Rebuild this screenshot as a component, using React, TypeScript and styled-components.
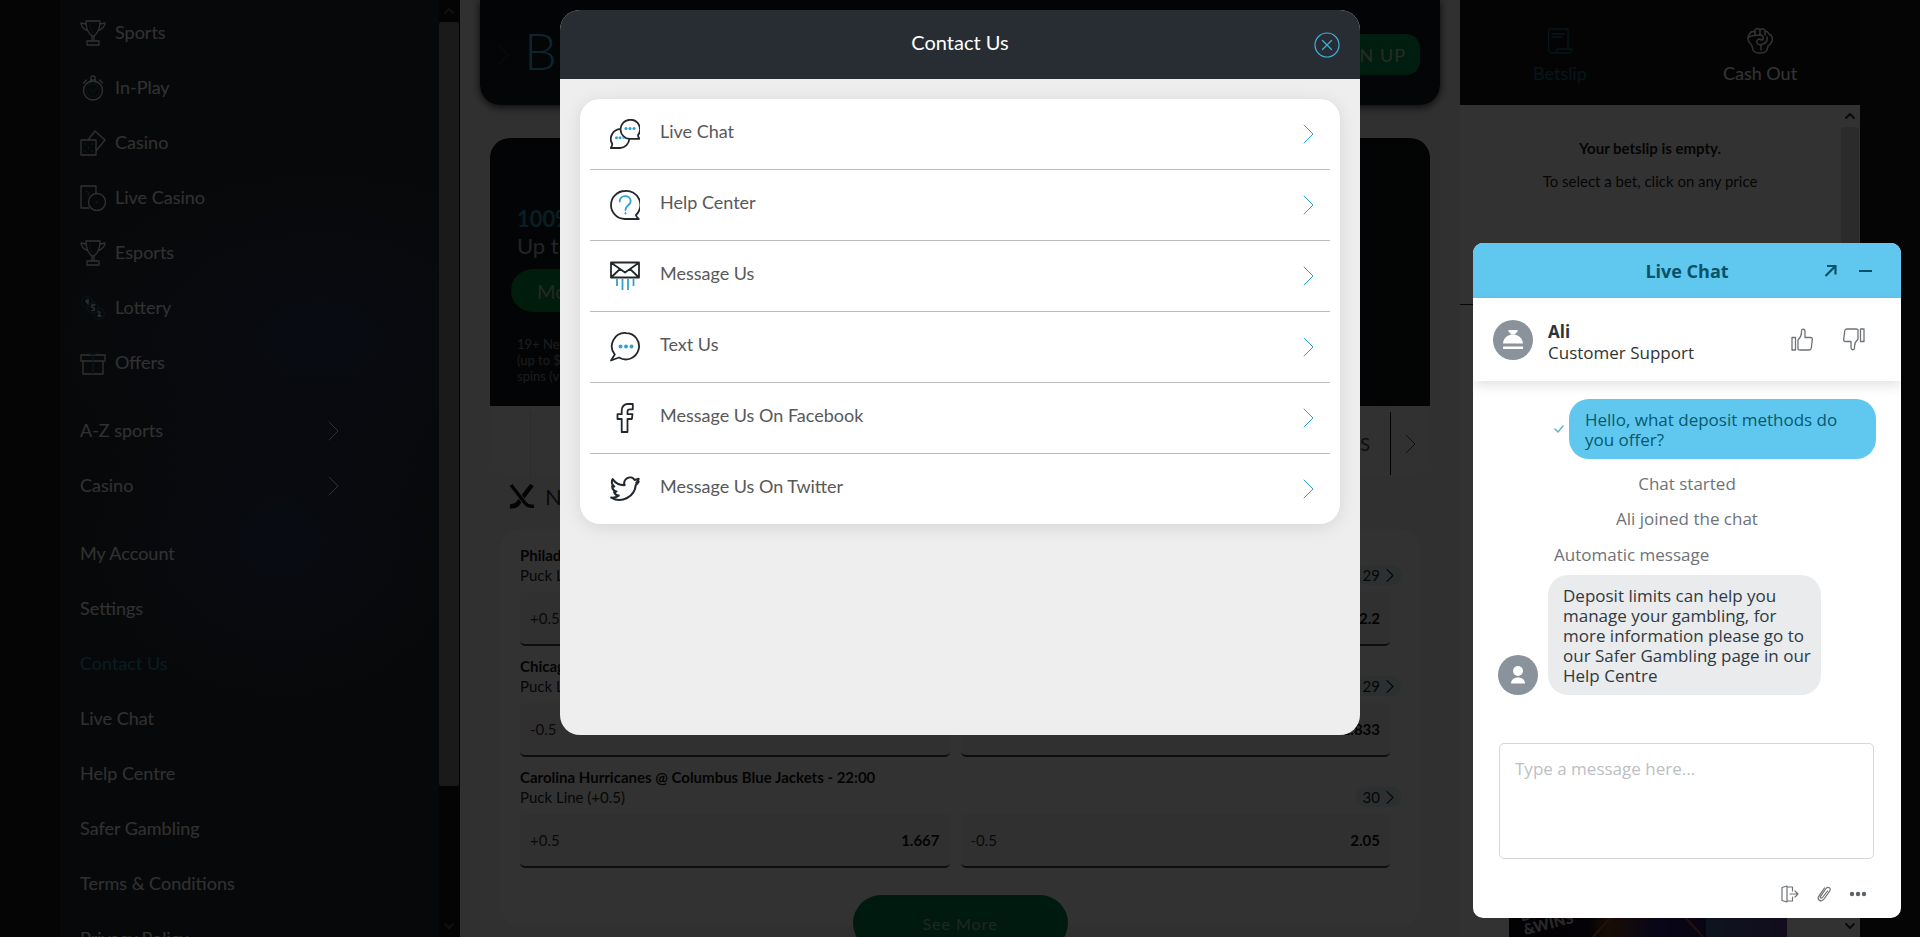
import React from "react";
import styled, { createGlobalStyle } from "styled-components";

const GlobalStyle = createGlobalStyle`
  *, *::before, *::after { box-sizing: border-box; }
  html, body, #root { height: 100%; }
  body {
    margin: 0;
    overflow: hidden;
    background: #1b1b1b;
    font-family: Lato, "Liberation Sans", sans-serif;
    font-size: 18px;
    color: #333;
  }
  button, textarea { font: inherit; }
  button { border: 0; padding: 0; background: none; color: inherit; cursor: pointer; }
  a { color: inherit; text-decoration: none; }
  h1, h2, p, ul { margin: 0; padding: 0; }
  ul { list-style: none; }
  svg { display: block; flex: none; }
`;

/* ---------- page shell ---------- */

const Page = styled.div`
  display: flex;
  height: 100vh;
  padding: 0 60px;
  overflow: hidden;
`;

const Sidebar = styled.aside`
  display: flex;
  flex: none;
  width: 400px;
  background:
    radial-gradient(ellipse 200px 170px at 220px 540px, #2b3a5a 0%, rgba(43, 58, 90, 0) 100%),
    radial-gradient(ellipse 280px 180px at 260px 340px, #2b3a5a 0%, rgba(43, 58, 90, 0) 100%),
    #262b30;
  border-right: 1px solid #000;
`;

const Menu = styled.nav`
  flex: 1;
  padding: 5px 20px 0;
`;

const MenuGroup = styled.ul`
  margin-bottom: 13px;
`;

const MenuLink = styled.a<{ $active?: boolean }>`
  display: flex;
  align-items: center;
  gap: 9px;
  height: 55px;
  color: ${(p) => (p.$active ? "#2a90b0" : "#f4f4f4")};
`;

const MenuLabel = styled.span`
  padding-bottom: 2px;
`;

const MenuArrow = styled.span`
  margin-left: auto;
  margin-right: 80px;
`;

const ScrollRail = styled.div<{ $light?: boolean }>`
  display: flex;
  flex-direction: column;
  flex: none;
  align-items: center;
  width: 20px;
  padding: 8px 0;
  background: ${(p) => (p.$light ? "#f8f8f8" : "#161618")};
`;

const ScrollThumb = styled.div<{ $light?: boolean }>`
  width: ${(p) => (p.$light ? "18px" : "20px")};
  height: 83%;
  margin: 8px 0 auto;
  border-radius: 3px;
  background: ${(p) => (p.$light ? "#d6d6d6" : "#848488")};
`;

const Main = styled.main`
  flex: 1;
  min-width: 0;
  overflow: hidden;
  background: #f0f0f0;
`;

/* ---------- centre column ---------- */

const TopBar = styled.header`
  display: flex;
  align-items: center;
  height: 105px;
  margin: 0 20px;
  padding: 4px 20px 0 18px;
  border-radius: 0 0 20px 20px;
  background: linear-gradient(#101619, #191d24);
  box-shadow: 0 2px 8px rgba(0, 0, 0, 0.8);
`;

const Logo = styled.span`
  margin-left: 15px;
  padding-bottom: 10px;
  font-size: 52px;
  font-weight: 300;
  line-height: 60px;
  color: #3fb4dc;
`;

const SignUp = styled.button`
  height: 41px;
  margin-left: auto;
  padding: 0 14px;
  border-radius: 14px;
  background: #00964c;
  color: #c4d4cc;
  letter-spacing: 1px;
`;

const Banner = styled.section`
  height: 268px;
  margin: 33px 30px 0;
  padding: 67px 27px 0;
  border-radius: 20px 20px 0 0;
  background: linear-gradient(90deg, #14171c, #0b171e 80%, #101417);
`;

const BannerTitle = styled.p<{ $accent?: boolean }>`
  font-size: 22px;
  line-height: 27px;
  font-weight: ${(p) => (p.$accent ? 700 : 400)};
  color: ${(p) => (p.$accent ? "#2a98b8" : "#b4b4b4")};
`;

const BannerButton = styled.button`
  display: block;
  height: 43px;
  margin: 10px 0 24px -6px;
  padding: 0 26px;
  border-radius: 22px;
  background: #008a32;
  color: #b8c8b8;
  font-size: 20px;
`;

const BannerTerms = styled.p`
  font-size: 13px;
  line-height: 16px;
  color: #8c8c8c;
`;

const Tabs = styled.nav`
  display: flex;
  justify-content: space-between;
  height: 69px;
  margin: 0 30px;
  padding-top: 6px;
  border-radius: 0 0 20px 20px;
  background: #f6f6f6;
`;

const TabEdge = styled.div<{ $end?: boolean }>`
  display: flex;
  align-items: center;
  width: ${(p) => (p.$end ? "auto" : "41px")};
  border-right: ${(p) => (p.$end ? "0" : "1px solid #d8d8d8")};
  color: #444;
`;

const TabDivider = styled.span`
  height: 100%;
  margin: 0 14px 0 20px;
  border-left: 1px solid #000;
`;

const TabNext = styled.button`
  display: flex;
  width: 25px;
`;

const LeagueTitle = styled.h2`
  display: flex;
  align-items: center;
  gap: 10px;
  height: 42px;
  padding-left: 49px;
  font-size: 22px;
  font-weight: 400;
`;

const Panel = styled.section`
  display: flex;
  flex-direction: column;
  gap: 10px;
  margin: 12px 40px 0;
  padding: 16px 20px 57px;
  border-radius: 20px;
  background: #fafafa;
`;

const EventBlock = styled.article`
  padding-right: 10px;
  font-size: 15px;
  line-height: 20px;
`;

const EventName = styled.p`
  font-weight: 700;
  color: #141414;
`;

const EventMarket = styled.div`
  display: flex;
  justify-content: space-between;
  color: #222;
`;

const MoreMarkets = styled.a`
  display: flex;
  align-items: center;
  gap: 6px;
  margin-right: -12px;
  padding: 0 8px;
  border-radius: 10px;
  background: #e2eff4;
`;

const Odds = styled.div`
  display: flex;
  gap: 11px;
  margin-top: 7px;
`;

const OddsButton = styled.button`
  display: flex;
  flex: 1;
  align-items: center;
  justify-content: space-between;
  height: 54px;
  padding: 0 10px;
  border-radius: 5px;
  border-bottom: 2px solid #444;
  background: #efefef;
  color: #333;
  b { color: #141414; }
`;

const SeeMoreRow = styled.div`
  display: flex;
  justify-content: center;
  margin-top: -30px;
`;

const SeeMore = styled.button`
  width: 215px;
  height: 56px;
  border-radius: 28px;
  background: #00824a;
  color: #a0bcae;
  font-size: 16px;
  letter-spacing: 1px;
`;

/* ---------- bet slip column ---------- */

const SlipColumn = styled.aside`
  display: flex;
  flex: none;
  flex-direction: column;
  width: 400px;
  background: #fbfbfb;
`;

const SlipTabs = styled.div`
  display: flex;
  flex: none;
  height: 105px;
  background: #14181c;
`;

const SlipTab = styled.button<{ $active?: boolean }>`
  display: flex;
  flex: 1;
  flex-direction: column;
  align-items: center;
  gap: 8px;
  padding-top: 28px;
  color: ${(p) => (p.$active ? "#226b80" : "#fff")};
`;

const SlipBody = styled.div`
  display: flex;
  flex: 1;
  min-height: 0;
`;

const SlipContent = styled.div`
  display: flex;
  flex: 1;
  flex-direction: column;
`;

const SlipEmpty = styled.div`
  display: flex;
  flex-direction: column;
  align-items: center;
  gap: 13px;
  height: 200px;
  padding-top: 33px;
  border-bottom: 1px solid #222;
  font-size: 15px;
  line-height: 20px;
  color: #1c1c1c;
`;

const Promo = styled.div`
  height: 60px;
  margin-top: auto;
  margin-left: 49px;
`;

/* ---------- contact dialog ---------- */

const Backdrop = styled.div`
  position: fixed;
  inset: 0;
  display: flex;
  align-items: flex-start;
  justify-content: center;
  padding: 10px 20px;
  background: rgba(0, 0, 0, 0.8);
`;

const Dialog = styled.section`
  display: flex;
  flex-direction: column;
  width: 800px;
  min-height: 725px;
  border-radius: 20px;
  overflow: hidden;
  background: #eee;
`;

const DialogHeader = styled.header`
  display: grid;
  grid-template-columns: 1fr auto 1fr;
  align-items: center;
  height: 69px;
  padding: 0 20px;
  background: #272d33;
`;

const DialogTitle = styled.h1`
  grid-column: 2;
  padding-bottom: 5px;
  font-size: 20px;
  line-height: 24px;
  font-weight: 400;
  color: #fff;
`;

const CloseButton = styled.button`
  justify-self: end;
`;

const ContactList = styled.ul`
  margin: 20px;
  padding: 0 10px;
  border-radius: 20px;
  background: #fff;
  box-shadow: 0 3px 18px rgba(0, 0, 0, 0.1);
`;

const ContactItem = styled.li`
  & + & { border-top: 1px solid #bbb; }
`;

const ContactLink = styled.a`
  display: flex;
  align-items: center;
  gap: 20px;
  height: 70px;
  padding: 0 16px 0 20px;
  color: #58585a;
`;

const ContactLabel = styled.span`
  flex: 1;
  padding-bottom: 7px;
`;

/* ---------- live chat ---------- */

const Chat = styled.section`
  position: fixed;
  right: 19px;
  bottom: 19px;
  display: flex;
  flex-direction: column;
  width: 428px;
  border-radius: 10px;
  overflow: hidden;
  background: #fff;
  font-family: "Open Sans", "Noto Sans", sans-serif;
  font-size: 17px;
  line-height: 20px;
  color: #6d7378;
`;

const ChatHeader = styled.header`
  display: grid;
  grid-template-columns: 1fr auto 1fr;
  align-items: center;
  height: 55px;
  padding: 0 28px;
  background: #60c8ee;
  color: #075268;
`;

const ChatTitle = styled.h2`
  grid-column: 2;
  font-size: 18px;
  line-height: 20px;
  font-weight: 700;
`;

const ChatActions = styled.div<{ $gap: number }>`
  display: flex;
  align-items: center;
  justify-content: flex-end;
  gap: ${(p) => p.$gap}px;
  margin-left: auto;
`;

const AgentBar = styled.div`
  display: flex;
  align-items: center;
  height: 83px;
  padding: 0 36px 0 20px;
  gap: 15px;
  box-shadow: 0 4px 12px rgba(0, 0, 0, 0.12);
`;

const AgentText = styled.div`
  padding-top: 4px;
  line-height: 21px;
  color: #2f3437;
`;

const Avatar = styled.span`
  display: flex;
  flex: none;
  align-items: center;
  justify-content: center;
  width: 40px;
  height: 40px;
  border-radius: 50%;
  background: #8a939b;
`;

const Messages = styled.div`
  display: flex;
  flex-direction: column;
  padding: 18px 25px 0;
`;

const MessageRow = styled.div<{ $own?: boolean }>`
  display: flex;
  align-items: ${(p) => (p.$own ? "center" : "flex-end")};
  justify-content: ${(p) => (p.$own ? "flex-end" : "flex-start")};
  gap: ${(p) => (p.$own ? "5px" : "10px")};
`;

const Bubble = styled.p<{ $own?: boolean }>`
  width: ${(p) => (p.$own ? "307px" : "273px")};
  padding: ${(p) => (p.$own ? "11px 16px 9px" : "11px 4px 9px 15px")};
  border-radius: 20px;
  background: ${(p) => (p.$own ? "#60c8ee" : "#e9ebed")};
  color: ${(p) => (p.$own ? "#07596f" : "#2f3941")};
`;

const Notice = styled.p`
  margin-top: 15px;
  text-align: center;
`;

const Sender = styled.p`
  margin: 16px 0 10px 56px;
`;

const MessageBox = styled.textarea`
  display: block;
  height: 116px;
  margin: 48px 27px 0 26px;
  padding: 15px;
  border: 1px solid #d4d8dc;
  border-radius: 5px;
  background: #fff;
  resize: none;
  outline: 0;
  &::placeholder { color: #bcc0c3; opacity: 1; }
`;

const ChatFooter = styled.footer`
  padding: 26px 34px 15px;
`;

const Stroke = styled.svg`
  fill: none;
  stroke: currentColor;
  stroke-width: 1;
  stroke-linecap: round;
  stroke-linejoin: round;
`;

/* ---------- icons ---------- */

const ACCENT = "#2fa3cf";
const INK = "#23282c";

const Chevron = ({ color = "currentColor", w = 11, h = 20, weight = 1 }: { color?: string; w?: number; h?: number; weight?: number }) => (
  <Stroke width={w} height={h} viewBox="0 0 11 20" style={{ strokeWidth: weight }} color={color}>
    <path d="M1 1l9 9-9 9" />
  </Stroke>
);

const ScrollArrow = ({ down, color }: { down?: boolean; color: string }) => (
  <Stroke width="10" height="6" viewBox="0 0 10 6" color={color} style={{ strokeWidth: 2 }}>
    <path d={down ? "M1 1l4 4 4-4" : "M1 5l4-4 4 4"} />
  </Stroke>
);

const menuDrawings: Record<string, React.ReactNode> = {
  trophy: (
    <>
      <path d="M6 1h14c0 7-2 12-6 15h-2C8 13 6 8 6 1zM6 4l-5-1c0 4 3 6 7 8M20 4l5-1c0 4-3 6-7 8M12 16v5M14 16v5M7 21h12v4H7z" />
      <path d="M10 3c0 5 1 8 3 10" stroke="#1c5a70" />
    </>
  ),
  stopwatch: (
    <>
      <circle cx="13" cy="15.5" r="9.5" />
      <circle cx="13" cy="3" r="2.2" />
      <path d="M11 4.500 10 7M15 4.500 16 7M3.500 8l3-3M22.500 8l-3-3" />
      <circle cx="13" cy="15.500" r="6.500" stroke="#1c5a70" />
      <path d="M10 14l3 3 4-4" stroke="#1c5a70" />
    </>
  ),
  dice: (
    <>
      <path d="M1 10h15v15H1zM8 10l7-9 10 9-9 11" />
      <path d="M5 14h.1M12 14h.1M8.500 17.500h.1M5 21h.1M12 21h.1" stroke="#2a7c96" strokeWidth="2" />
    </>
  ),
  cards: (
    <>
      <path d="M9 23H1V1h15v7" />
      <circle cx="17" cy="17" r="8.5" />
      <path d="M6 6l3 2-1 3M17 16v2M16 17h2" stroke="#2a7c96" />
    </>
  ),
  balls: (
    <>
      <g stroke="#1f6478">
        <circle cx="7" cy="7" r="5.500" />
        <circle cx="13" cy="13" r="5.500" />
        <circle cx="19" cy="19" r="5.500" />
      </g>
      <path d="M8.500 5c-3-1-3 3-.5 2.500V5M8 7.500V9M15 10h-3v2.500c3-.5 3.500 3 0 3M18 17c3-1 2 2 0 4h3" />
    </>
  ),
  gift: (
    <>
      <path d="M1 5h24v6H1zM3 11h20v13H3z" />
      <path d="M13 5v19M8 3l5 2 5-2" stroke="#2a7c96" />
    </>
  ),
};

const MenuIcon = ({ name }: { name: string }) => (
  <Stroke width="26" height="26" viewBox="0 0 26 26" style={{ strokeWidth: 1.3 }}>
    {menuDrawings[name]}
  </Stroke>
);

const contactDrawings: Record<string, React.ReactNode> = {
  liveChat: (
    <>
      <path d="M10.500 10.200A9.700 9.700 0 0 0 2.300 25c0 1.500-.7 2.700-1.600 4H10a9.700 9.700 0 0 0 9.300-9.500" />
      <path d="M20 .8a9.500 9.500 0 1 0 0 19h9.400c-.9-1.200-1.400-2.200-1.400-3.700A9.500 9.500 0 0 0 20 .8z" fill="#fff" />
      <g fill={ACCENT} stroke="none">
        <circle cx="16" cy="9.500" r="1.600" /><circle cx="20" cy="9.500" r="1.600" /><circle cx="24" cy="9.500" r="1.600" />
        <circle cx="6.500" cy="18.700" r="1.500" /><circle cx="10" cy="18.700" r="1.500" /><path d="M12.500 17.500l2.500 2.300h-2.500z" />
      </g>
    </>
  ),
  help: (
    <>
      <path d="M15 1a14 14 0 1 0 0 28h13.800c-1.300-1-2.600-2-2.900-3.800A14 14 0 0 0 15 1z" />
      <path d="M9.700 11.500c0-7 11-7 11-.5 0 4.500-5.200 4-5.200 9M15.500 23v.6" stroke={ACCENT} />
    </>
  ),
  mail: (
    <>
      <path d="M1 1.500h28v15H1zM1.500 2l13.500 9.500L28.500 2M1.500 16l8.500-8M28.500 16L20 8" />
      <path d="M7 18v7M12.500 18v11M18 18v11M23.500 18v7" stroke={ACCENT} strokeLinecap="butt" />
    </>
  ),
  text: (
    <>
      <path d="M16 1a13.200 13.200 0 1 1-7 24.500L1 28.500l3.800-6A13.200 13.200 0 0 1 16 1z" />
      <g fill={ACCENT} stroke="none">
        <circle cx="10.500" cy="14.500" r="2" /><circle cx="16" cy="14.500" r="2" /><circle cx="21.500" cy="14.500" r="2" />
      </g>
    </>
  ),
  facebook: <path d="M22.800 1v5.300h-3c-1.600 0-2.300.8-2.300 2.300v2.600h5l-.6 4.800h-4.400V29h-5.800V16H7.500v-4.800h4.200V7.500c0-4 2.500-6.500 6.300-6.500z" />,
  twitter: (
    <g transform="translate(1 2) scale(1.170)">
      <path d="M23.600 4.900a9.700 9.700 0 0 1-2 .9 4.900 4.900 0 0 0 2-3.400 9.900 9.900 0 0 1-3.400.9 4.900 4.900 0 0 0-8.600 4.500A12 12 0 0 1 1.400 2.700 4.900 4.900 0 0 0 2.800 9a4.900 4.900 0 0 1-1.800-.3 4.900 4.900 0 0 0 3.600 4.600 5 5 0 0 1-2 .2 4.900 4.900 0 0 0 4 3.300A9.900 9.900 0 0 1 .2 18.500 14 14 0 0 0 21.200 7.600a8 8 0 0 0 2.400-2.700z" />
    </g>
  ),
};

const ContactIcon = ({ name }: { name: string }) => (
  <Stroke width="30" height="30" viewBox="0 0 30 30" color={INK} style={{ strokeWidth: 1.8 }}>
    {contactDrawings[name]}
  </Stroke>
);

const CloseIcon = () => (
  <Stroke width="26" height="26" viewBox="0 0 26 26" color="#3fb0dc" style={{ strokeWidth: 1.2 }}>
    <circle cx="13" cy="13" r="12" />
    <path d="M8.500 8.500l9 9M17.500 8.500l-9 9" />
  </Stroke>
);

const ThumbIcon = ({ down }: { down?: boolean }) => (
  <Stroke width="22" height="23" viewBox="0 0 22 23" color="#6d7378" style={{ strokeWidth: 1.3 }}>
    <g transform={down ? "rotate(180 11 11.500)" : undefined}>
      <path d="M1 9.500h3.500v12.500H1zM7 21.500V12c2-2 3.500-4 3.500-7.500V3c0-2.500 3.500-2.500 3.500 1v5.500h5.500c1.500 0 2 1 1.800 2.200l-1 8.300c-.2 1.200-.8 2-2 2H9c-1 0-1.500-.3-2-.5z" />
    </g>
  </Stroke>
);

const BellIcon = () => (
  <svg width="22" height="22" viewBox="0 0 22 22" fill="#fff">
    <path d="M6.500 1h9v2l-2 1v1.500h-5V4l-2-1z" />
    <path d="M1 14.500C1.500 9 5.500 5.500 11 5.500S20.500 9 21 14.500zM1 17.500h20V20H1z" />
  </svg>
);

const PersonIcon = () => (
  <svg width="16" height="18" viewBox="0 0 16 18" fill="#fff">
    <circle cx="8" cy="5" r="5" />
    <path d="M1 17.500c0-8 14-8 14 0z" />
  </svg>
);

const BetslipIcon = () => (
  <Stroke width="26" height="26" viewBox="0 0 26 26" style={{ strokeWidth: 1.300 }}>
    <path d="M5 25c-3 0-3.500-2-3.500-4V3c0-1.500 1-2 2-2H21v20M5 25h16c3 0 4-2 4-4H10c0 3-1.500 4-4 4M5 6h12M5 9h9" />
  </Stroke>
);

const FistIcon = () => (
  <Stroke width="26" height="26" viewBox="0 0 26 26" style={{ strokeWidth: 1.500 }}>
    <path d="M4 16c-3-2-4-6-2-9l2-3c2-1 4-1 4 2V2c1-2 4-2 5 0v4V2c2-2 4-1 5 0v5V4c2-1 3 0 4 2 3 1 4 4 3 7-1 3-2 4-4 5l-1 4c-2 4-12 4-14 0l-1-4zM2 9c4-2 9-2 12-2 3 1 3 5 0 5-2-2-5 0-4 3 1 2 4 2 6 1 3-1 5-4 4-7M14 17v5" />
  </Stroke>
);

const HockeyIcon = () => (
  <svg width="26" height="26" viewBox="0 0 26 26" fill="none" stroke="#141414">
    <path d="M23 2L10 19q-3 5-9 4" strokeWidth="4.500" />
    <path d="M2 2l14 18q3 4 9 3" strokeWidth="5" stroke="#fafafa" />
    <path d="M2 2l14 18q3 4 9 3" strokeWidth="3.500" />
  </svg>
);

const PromoArt = () => (
  <svg width="278" height="60" viewBox="0 0 278 60">
    <defs>
      <linearGradient id="promoGlow" x1="0" x2="1">
        <stop offset="0" stopColor="#0c0812" />
        <stop offset="0.4" stopColor="#140a1c" />
        <stop offset="0.5" stopColor="#7a4414" />
        <stop offset="0.75" stopColor="#2a1e78" />
        <stop offset="1" stopColor="#301c58" />
      </linearGradient>
      <linearGradient id="promoSky" x1="0" x2="1">
        <stop offset="0" stopColor="#46689a" />
        <stop offset="1" stopColor="#5c3c90" />
      </linearGradient>
    </defs>
    <path d="M0 0h197v60H0z" fill="url(#promoGlow)" />
    <path d="M197 0h81v60h-81z" fill="url(#promoSky)" />
    <path d="M84 60l18-20h74l18 20" fill="none" stroke="#b05a3c" strokeWidth="2" />
    <g fill="#ccc" fontFamily="Lato, sans-serif" fontWeight="900" fontSize="15" transform="rotate(-14 16 58)">
      <text x="16" y="44">DROPS</text>
      <text x="16" y="58">&amp;WINS</text>
    </g>
  </svg>
);

/* ---------- data ---------- */

const products = [
  ["trophy", "Sports"],
  ["stopwatch", "In-Play"],
  ["dice", "Casino"],
  ["cards", "Live Casino"],
  ["trophy", "Esports"],
  ["balls", "Lottery"],
  ["gift", "Offers"],
];

const categories = ["A-Z sports", "Casino"];

const accountLinks = [
  "My Account",
  "Settings",
  "Contact Us",
  "Live Chat",
  "Help Centre",
  "Safer Gambling",
  "Terms & Conditions",
  "Privacy Policy",
];

const contacts = [
  ["liveChat", "Live Chat"],
  ["help", "Help Center"],
  ["mail", "Message Us"],
  ["text", "Text Us"],
  ["facebook", "Message Us On Facebook"],
  ["twitter", "Message Us On Twitter"],
];

const events = [
  { name: "Philadelphia", market: "Puck Line", more: 29, odds: [["+0.5", ""], ["", "2.2"]] },
  { name: "Chicago", market: "Puck Line", more: 29, odds: [["-0.5", ""], ["", "1.833"]] },
  {
    name: "Carolina Hurricanes @ Columbus Blue Jackets - 22:00",
    market: "Puck Line (+0.5)",
    more: 30,
    odds: [["+0.5", "1.667"], ["-0.5", "2.05"]],
  },
];

/* ---------- sections ---------- */

const SideMenu = () => (
  <Sidebar>
    <Menu>
      <MenuGroup>
        {products.map(([icon, label]) => (
          <li key={label}>
            <MenuLink href="#"><MenuIcon name={icon} /><MenuLabel>{label}</MenuLabel></MenuLink>
          </li>
        ))}
      </MenuGroup>
      <MenuGroup>
        {categories.map((label) => (
          <li key={label}>
            <MenuLink href="#"><MenuLabel>{label}</MenuLabel><MenuArrow><Chevron /></MenuArrow></MenuLink>
          </li>
        ))}
      </MenuGroup>
      <MenuGroup>
        {accountLinks.map((label) => (
          <li key={label}>
            <MenuLink href="#" $active={label === "Contact Us"}><MenuLabel>{label}</MenuLabel></MenuLink>
          </li>
        ))}
      </MenuGroup>
    </Menu>
    <ScrollRail>
      <ScrollArrow color="#555" />
      <ScrollThumb />
      <ScrollArrow down color="#555" />
    </ScrollRail>
  </Sidebar>
);

const Centre = () => (
  <Main>
    <TopBar>
      <Chevron color="#1f4f66" />
      <Logo>B</Logo>
      <SignUp>SIGN UP</SignUp>
    </TopBar>
    <Banner>
      <BannerTitle $accent>100%</BannerTitle>
      <BannerTitle>Up to</BannerTitle>
      <BannerButton>More</BannerButton>
      <BannerTerms>19+ New</BannerTerms>
      <BannerTerms>(up to $</BannerTerms>
      <BannerTerms>spins (v</BannerTerms>
    </Banner>
    <Tabs>
      <TabEdge />
      <TabEdge $end>
        <span>S</span>
        <TabDivider />
        <TabNext aria-label="Next"><Chevron /></TabNext>
      </TabEdge>
    </Tabs>
    <LeagueTitle><HockeyIcon />NHL</LeagueTitle>
    <Panel>
      {events.map((event) => (
        <EventBlock key={event.name}>
          <EventName>{event.name}</EventName>
          <EventMarket>
            {event.market}
            <MoreMarkets href="#">{event.more}<Chevron w={8} h={13} weight={2} /></MoreMarkets>
          </EventMarket>
          <Odds>
            {event.odds.map(([line, price], i) => (
              <OddsButton key={i}><span>{line}</span><b>{price}</b></OddsButton>
            ))}
          </Odds>
        </EventBlock>
      ))}
    </Panel>
    <SeeMoreRow><SeeMore>See More</SeeMore></SeeMoreRow>
  </Main>
);

const Betslip = () => (
  <SlipColumn>
    <SlipTabs>
      <SlipTab $active><BetslipIcon />Betslip</SlipTab>
      <SlipTab><FistIcon />Cash Out</SlipTab>
    </SlipTabs>
    <SlipBody>
      <SlipContent>
        <SlipEmpty>
          <b>Your betslip is empty.</b>
          <p>To select a bet, click on any price</p>
        </SlipEmpty>
        <Promo><PromoArt /></Promo>
      </SlipContent>
      <ScrollRail $light>
        <ScrollArrow color="#333" />
        <ScrollThumb $light />
        <ScrollArrow down color="#333" />
      </ScrollRail>
    </SlipBody>
  </SlipColumn>
);

const ContactDialog = () => (
  <Backdrop>
    <Dialog role="dialog" aria-labelledby="contact-title">
      <DialogHeader>
        <DialogTitle id="contact-title">Contact Us</DialogTitle>
        <CloseButton aria-label="Close"><CloseIcon /></CloseButton>
      </DialogHeader>
      <ContactList>
        {contacts.map(([icon, label]) => (
          <ContactItem key={label}>
            <ContactLink href="#">
              <ContactIcon name={icon} />
              <ContactLabel>{label}</ContactLabel>
              <Chevron color={ACCENT} />
            </ContactLink>
          </ContactItem>
        ))}
      </ContactList>
    </Dialog>
  </Backdrop>
);

const LiveChat = () => (
  <Chat aria-label="Live Chat">
    <ChatHeader>
      <ChatTitle>Live Chat</ChatTitle>
      <ChatActions $gap={20}>
        <button aria-label="Pop out">
          <Stroke width="16" height="16" viewBox="0 0 16 16" style={{ strokeWidth: 2.2, strokeLinecap: "butt", strokeLinejoin: "miter" }}>
            <path d="M4 3h8.500v8.500M12 3.500L2.500 13" />
          </Stroke>
        </button>
        <button aria-label="Minimise">
          <Stroke width="14" height="16" viewBox="0 0 14 16" style={{ strokeWidth: 2, strokeLinecap: "butt" }}>
            <path d="M0 8h13" />
          </Stroke>
        </button>
      </ChatActions>
    </ChatHeader>
    <AgentBar>
      <Avatar><BellIcon /></Avatar>
      <AgentText>
        <b>Ali</b>
        <p>Customer Support</p>
      </AgentText>
      <ChatActions $gap={30}>
        <button aria-label="Good"><ThumbIcon /></button>
        <button aria-label="Bad"><ThumbIcon down /></button>
      </ChatActions>
    </AgentBar>
    <Messages>
      <MessageRow $own>
        <Stroke width="10" height="8" viewBox="0 0 10 8" color="#6ab4c4" style={{ strokeWidth: 1.5 }}>
          <path d="M1 4l3 3 5-6" />
        </Stroke>
        <Bubble $own>Hello, what deposit methods do you offer?</Bubble>
      </MessageRow>
      <Notice>Chat started</Notice>
      <Notice>Ali joined the chat</Notice>
      <Sender>Automatic message</Sender>
      <MessageRow>
        <Avatar><PersonIcon /></Avatar>
        <Bubble>
          Deposit limits can help you manage your gambling, for more information please go to our Safer Gambling page in our Help Centre
        </Bubble>
      </MessageRow>
    </Messages>
    <MessageBox aria-label="Message" placeholder="Type a message here..." />
    <ChatFooter>
      <ChatActions $gap={18}>
        <button aria-label="End chat">
          <Stroke width="18" height="18" viewBox="0 0 18 18" color="#6d7378" style={{ strokeWidth: 1.200 }}>
            <path d="M1 2.500L6 1v16l-5-1.500zM6 2h5.500v4M6 16h5.500v-4M9 9h8M14 6l3 3-3 3" />
          </Stroke>
        </button>
        <button aria-label="Attach a file">
          <Stroke width="14" height="18" viewBox="0 0 14 18" color="#6d7378" style={{ strokeWidth: 1.200 }}>
            <path d="M10.500 6L5.500 12.500c-1.200 1.500-3 .3-2-1.200L9 3.500c2-2.500 5.500-.5 3.800 2.300L7 14c-2.500 3.500-7.500 1-5.300-2.700L7.500 3" />
          </Stroke>
        </button>
        <button aria-label="Options">
          <svg width="18" height="18" viewBox="0 0 18 18" fill="#5d6368">
            <circle cx="3" cy="9" r="2.200" /><circle cx="9" cy="9" r="2.200" /><circle cx="15" cy="9" r="2.200" />
          </svg>
        </button>
      </ChatActions>
    </ChatFooter>
  </Chat>
);

export default function App() {
  return (
    <>
      <GlobalStyle />
      <Page>
        <SideMenu />
        <Centre />
        <Betslip />
      </Page>
      <ContactDialog />
      <LiveChat />
    </>
  );
}
